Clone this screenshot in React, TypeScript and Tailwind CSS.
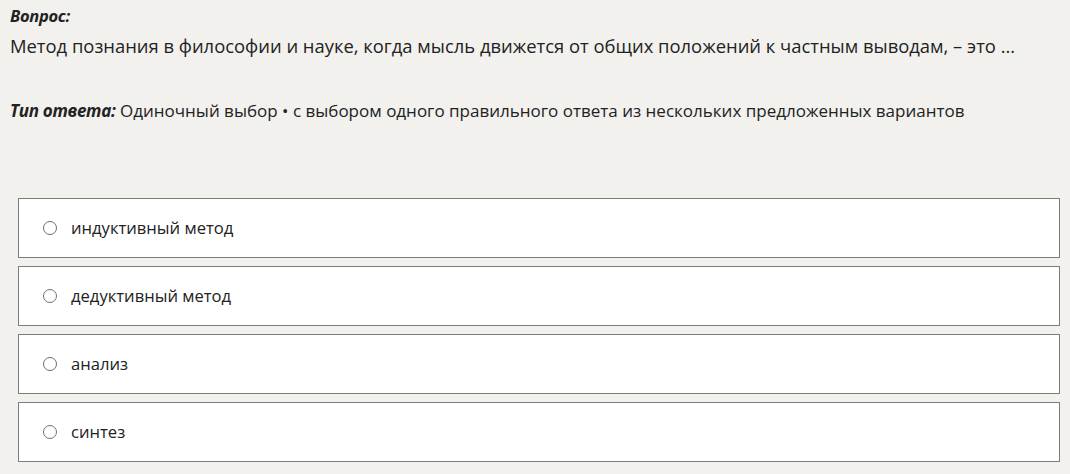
const options = ["индуктивный метод", "дедуктивный метод", "анализ", "синтез"];

export default function App() {
  return (
    <div className="min-h-[474px] w-[1070px] bg-[#f2f1ee] pt-[5px] text-[#222] [font-family:'Open_Sans','Noto_Sans',sans-serif]">
      <div className="px-[10px]">
        <p className="text-[16.5px] font-bold italic leading-[22px] tracking-[-0.3px]">Вопрос:</p>
        <p className="mt-[6px] text-[18.4px] leading-[26px]">
          Метод познания в философии и науке, когда мысль движется от общих положений к частным выводам, – это ...
        </p>
        <p className="mt-[40px] text-[17px] leading-[24px]">
          <span className="font-bold italic tracking-[-0.3px]">Тип ответа:</span> Одиночный выбор • с выбором одного правильного ответа из нескольких предложенных вариантов
        </p>
      </div>

      <div className="mt-[75px] flex flex-col gap-[8px] pl-[18px] pr-[10px]">
        {options.map((opt) => (
          <label
            key={opt}
            className="flex h-[60px] items-center gap-[14px] border border-[#7c7c7c] bg-white pl-[24px]"
          >
            <span className="h-[14px] w-[14px] rounded-full border-[1.5px] border-[#6f6f6f] bg-white" />
            <span className="text-[16.6px]">{opt}</span>
          </label>
        ))}
      </div>
    </div>
  );
}
